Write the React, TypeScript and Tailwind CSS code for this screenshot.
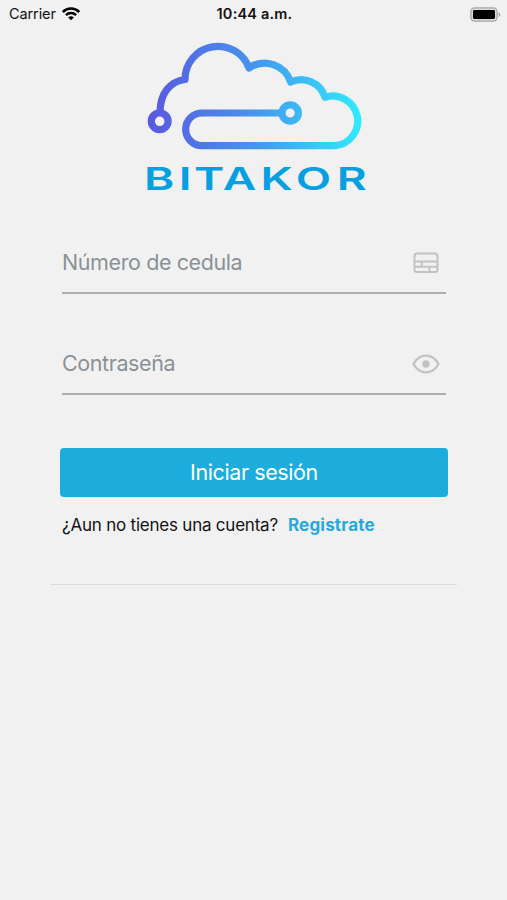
import type { ReactNode } from 'react'

function WifiIcon() {
  return (
    <svg width="18" height="14" viewBox="0 0 18 14" fill="none" stroke="#000" strokeWidth="2.5">
      <path d="M0.8 5a11.6 11.6 0 0 1 16.4 0" />
      <path d="M3.9 8.2a7.2 7.2 0 0 1 10.2 0" />
      <path d="M9 13.2 6.2 10.6a4 4 0 0 1 5.6 0z" fill="#000" stroke="none" />
    </svg>
  )
}

function BatteryIcon() {
  return (
    <svg width="31" height="15" viewBox="0 0 31 15">
      <rect x="0.9" y="0.9" width="26.2" height="13.2" rx="3.6" fill="#d8d8d8" stroke="#a8a8a8" strokeWidth="1.3" />
      <rect x="3" y="3" width="22" height="9" rx="1.4" fill="#000" />
      <path d="M28.6 5v5c1-.4 1.7-1.3 1.7-2.5S29.6 5.4 28.6 5z" fill="#a8a8a8" />
    </svg>
  )
}

function StatusBar() {
  return (
    <header className="grid h-7 grid-cols-3 items-center pl-[9px] pr-[6px] text-[#111]">
      <div className="flex items-center gap-[6px]">
        <span className="text-[14.5px] tracking-[-0.1px]">Carrier</span>
        <WifiIcon />
      </div>
      <span className="-ml-px text-center text-[14.5px] font-semibold tracking-[0.2px]">10:44 a.m.</span>
      <div className="flex justify-end">
        <BatteryIcon />
      </div>
    </header>
  )
}

function Logo() {
  return (
    <svg className="ml-[140px] mt-[7px]" width="235" height="165" viewBox="0 0 235 165">
      <defs>
        <linearGradient id="cloud" gradientUnits="userSpaceOnUse" x1="8" y1="80" x2="223" y2="80">
          <stop offset="0" stopColor="#5a58e0" />
          <stop offset="0.5" stopColor="#4596ee" />
          <stop offset="1" stopColor="#30ecff" />
        </linearGradient>
      </defs>
      <g fill="none" stroke="url(#cloud)" strokeWidth="7.2" strokeLinejoin="round">
        <path d="M20 78C20 58 30 46.5 45 44.5A33 33 0 0 1 109 33A27.500 27.500 0 0 1 150.700 47A25 25 0 0 1 185 62.300A24.900 24.900 0 1 1 195.500 110.700H62A16.350 16.350 0 0 1 62 78H142" />
        <circle cx="19.7" cy="86.3" r="8.4" />
        <circle cx="150.2" cy="78" r="8.2" />
      </g>
      <text
        transform="scale(1.46 1)"
        x="2.7 26.5 37 56.7 82.5 106.7 134.8"
        y="155.3"
        fill="#06a0e0"
        fontFamily="Inter, sans-serif"
        fontSize="31.5"
        fontWeight="600"
      >
        BITAKOR
      </text>
    </svg>
  )
}

function CardIcon() {
  return (
    <svg className="mr-px" width="26" height="22" viewBox="0 0 26 22" fill="none" stroke="#c2c2c2" strokeWidth="2">
      <rect x="1.5" y="1.5" width="23" height="18.5" rx="2.5" />
      <path d="M1.5 9.5h23M1.5 14.7h23M8.7 9.500v5.200M16.500 14.700V20" />
    </svg>
  )
}

function EyeIcon() {
  return (
    <svg width="28" height="20" viewBox="0 0 28 20" fill="none" stroke="#c2c2c2" strokeWidth="2.2">
      <path d="M1.5 10C4.5 4.5 9 1.6 14 1.6S23.5 4.5 26.5 10C23.5 15.5 19 18.4 14 18.4S4.500 15.500 1.500 10z" />
      <circle cx="14" cy="10" r="3.7" fill="#c2c2c2" stroke="none" />
    </svg>
  )
}

function Field({ label, icon }: { label: string; icon: ReactNode }) {
  return (
    <label className="flex h-[61px] items-center justify-between border-b-2 border-[#adadaf] pr-[6px]">
      <span className="text-[21.5px] tracking-[-0.4px] text-[#8a9196]">{label}</span>
      {icon}
    </label>
  )
}

export default function App() {
  return (
    <div className="h-[900px] w-[507px] overflow-hidden bg-[#f1f1f1] font-['Inter',sans-serif]">
      <StatusBar />
      <Logo />

      <main className="mx-[50px]">
        <div className="ml-3 mr-[11px] mt-[33px] flex flex-col gap-10">
          <Field label="Número de cedula" icon={<CardIcon />} />
          <Field label="Contraseña" icon={<EyeIcon />} />
        </div>

        <button className="mx-[10px] mt-[53px] block h-[49px] w-[388px] rounded-[4px] bg-[#1daddd] text-[21.5px] tracking-[-0.4px] text-white">
          Iniciar sesión
        </button>

        <p className="mx-3 mt-[16px] flex items-center gap-[10px] text-[17px] leading-6">
          <span className="tracking-[-0.22px] text-[#111]">¿Aun no tienes una cuenta?</span>
          <a className="font-bold tracking-[0.2px] text-[#26a9d9]">Registrate</a>
        </p>

        <hr className="mt-[47px] border-[#dcdcdc]" />
      </main>
    </div>
  )
}
